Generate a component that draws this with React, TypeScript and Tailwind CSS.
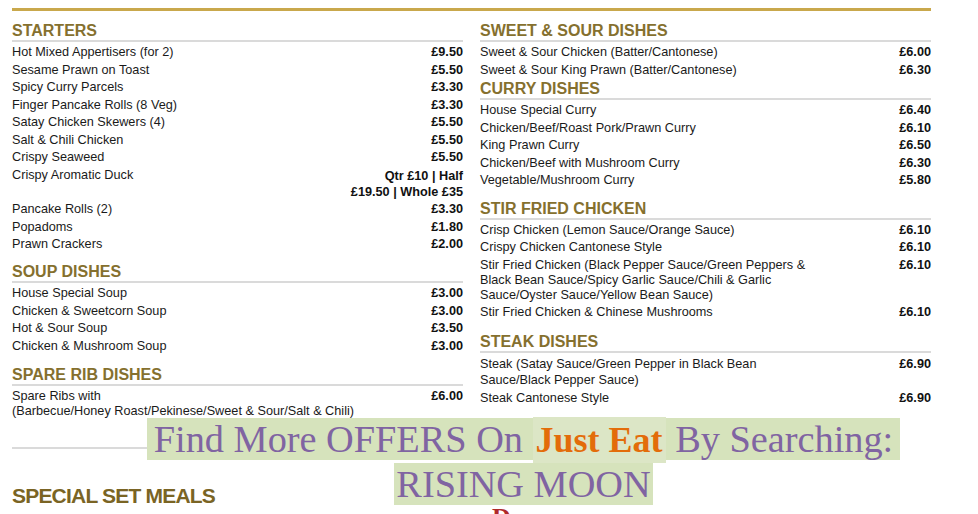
import React from "react";

type Item = { name: string[]; price: string[]; priceLeading?: string; extra?: string };
type Section = { title: string; mt: string; items: Item[] };

const i = (name: string | string[], price: string | string[], priceLeading?: string, extra?: string): Item => ({
  name: Array.isArray(name) ? name : [name],
  price: Array.isArray(price) ? price : [price],
  priceLeading,
  extra,
});

const leftSections: Section[] = [
  {
    title: "STARTERS",
    mt: "mt-0",
    items: [
      i("Hot Mixed Appertisers (for 2)", "£9.50"),
      i("Sesame Prawn on Toast", "£5.50"),
      i("Spicy Curry Parcels", "£3.30"),
      i("Finger Pancake Rolls (8 Veg)", "£3.30"),
      i("Satay Chicken Skewers (4)", "£5.50"),
      i("Salt & Chili Chicken", "£5.50"),
      i("Crispy Seaweed", "£5.50"),
      i("Crispy Aromatic Duck", ["Qtr £10 | Half", "£19.50 | Whole £35"], "leading-[16px]"),
      i("Pancake Rolls (2)", "£3.30"),
      i("Popadoms", "£1.80"),
      i("Prawn Crackers", "£2.00"),
    ],
  },
  {
    title: "SOUP DISHES",
    mt: "mt-[6.5px]",
    items: [
      i("House Special Soup", "£3.00"),
      i("Chicken & Sweetcorn Soup", "£3.00"),
      i("Hot & Sour Soup", "£3.50"),
      i("Chicken & Mushroom Soup", "£3.00"),
    ],
  },
  {
    title: "SPARE RIB DISHES",
    mt: "mt-[7.5px]",
    items: [
      i(["Spare Ribs with", "(Barbecue/Honey Roast/Pekinese/Sweet & Sour/Salt & Chili)"], "£6.00"),
    ],
  },
];

const rightSections: Section[] = [
  {
    title: "SWEET & SOUR DISHES",
    mt: "mt-0",
    items: [
      i("Sweet & Sour Chicken (Batter/Cantonese)", "£6.00"),
      i("Sweet & Sour King Prawn (Batter/Cantonese)", "£6.30"),
    ],
  },
  {
    title: "CURRY DISHES",
    mt: "-mt-[2px]",
    items: [
      i("House Special Curry", "£6.40"),
      i("Chicken/Beef/Roast Pork/Prawn Curry", "£6.10"),
      i("King Prawn Curry", "£6.50"),
      i("Chicken/Beef with Mushroom Curry", "£6.30"),
      i("Vegetable/Mushroom Curry", "£5.80"),
    ],
  },
  {
    title: "STIR FRIED CHICKEN",
    mt: "mt-[7px]",
    items: [
      i("Crisp Chicken (Lemon Sauce/Orange Sauce)", "£6.10"),
      i("Crispy Chicken Cantonese Style", "£6.10"),
      i(
        [
          "Stir Fried Chicken (Black Pepper Sauce/Green Peppers &",
          "Black Bean Sauce/Spicy Garlic Sauce/Chili & Garlic",
          "Sauce/Oyster Sauce/Yellow Bean Sauce)",
        ],
        "£6.10"
      ),
      i("Stir Fried Chicken & Chinese Mushrooms", "£6.10"),
    ],
  },
  {
    title: "STEAK DISHES",
    mt: "mt-[8px]",
    items: [
      i(["Steak (Satay Sauce/Green Pepper in Black Bean", "Sauce/Black Pepper Sauce)"], "£6.90", undefined, "leading-[16.5px]"),
      i("Steak Cantonese Style", "£6.90"),
    ],
  },
];

function Row({ item }: { item: Item }) {
  return (
    <div className={`flex justify-between py-[1.25px] text-[12.7px] text-[#1a1a1a] ${item.extra ?? "leading-[15px]"}`}>
      <div className="whitespace-nowrap">
        {item.name.map((l, k) => (
          <div key={k}>{l}</div>
        ))}
      </div>
      <div className={`whitespace-nowrap text-right font-bold text-[#111] ${item.priceLeading ?? ""}`}>
        {item.price.map((l, k) => (
          <div key={k}>{l}</div>
        ))}
      </div>
    </div>
  );
}

function SectionBlock({ s }: { s: Section }) {
  return (
    <div className={s.mt}>
      <div className="border-b-2 border-[#dadada] pt-[3px] text-[16px] font-bold leading-[18px] text-[#85702e]">
        {s.title}
      </div>
      <div className="pt-[2px]">
        {s.items.map((it, k) => (
          <Row key={k} item={it} />
        ))}
      </div>
    </div>
  );
}

export default function App() {
  return (
    <div className="relative h-[514px] w-[978px] overflow-hidden bg-white font-['Liberation_Sans',Arial,sans-serif]">
      <div className="ml-[12px] w-[919px] pt-[8px]">
        <div className="h-[3px] bg-[#c9a84c]" />
        <div className="mt-[8px] grid grid-cols-[451px_451px] gap-x-[17px]">
          <div>
            {leftSections.map((s) => (
              <SectionBlock key={s.title} s={s} />
            ))}
            <div className="mt-[27px] h-[2px] bg-[#dadada]" />
            <div className="mt-[35px] text-[21px] font-bold leading-[24px] tracking-[-0.8px] text-[#7a6424]">
              SPECIAL SET MEALS
            </div>
          </div>
          <div>
            {rightSections.map((s) => (
              <SectionBlock key={s.title} s={s} />
            ))}
            <div className="mt-[97px] pl-[12px] font-['Liberation_Serif',serif] text-[26px] font-bold leading-none text-[#b0292b]">
              D
            </div>
          </div>
        </div>
      </div>

      <div className="absolute left-[146px] top-[416.5px] w-[755px] text-center font-['Liberation_Serif','Times_New_Roman',serif] text-[38.3px] leading-[45px] text-[#8064a2]">
        <div className="whitespace-nowrap">
          <span className="bg-[#d6e3bc] px-[7px]">
            Find More OFFERS On{" "}
            <span className="bg-[#dce6c6] px-[3px] py-[3px] text-[36px] font-bold leading-[40px] text-[#e36c0a]">
              Just Eat
            </span>{" "}
            By Searching:
          </span>
        </div>
        <div className="whitespace-nowrap">
          <span className="bg-[#d6e3bc] px-[2px]">RISING MOON</span>
        </div>
      </div>
    </div>
  );
}
